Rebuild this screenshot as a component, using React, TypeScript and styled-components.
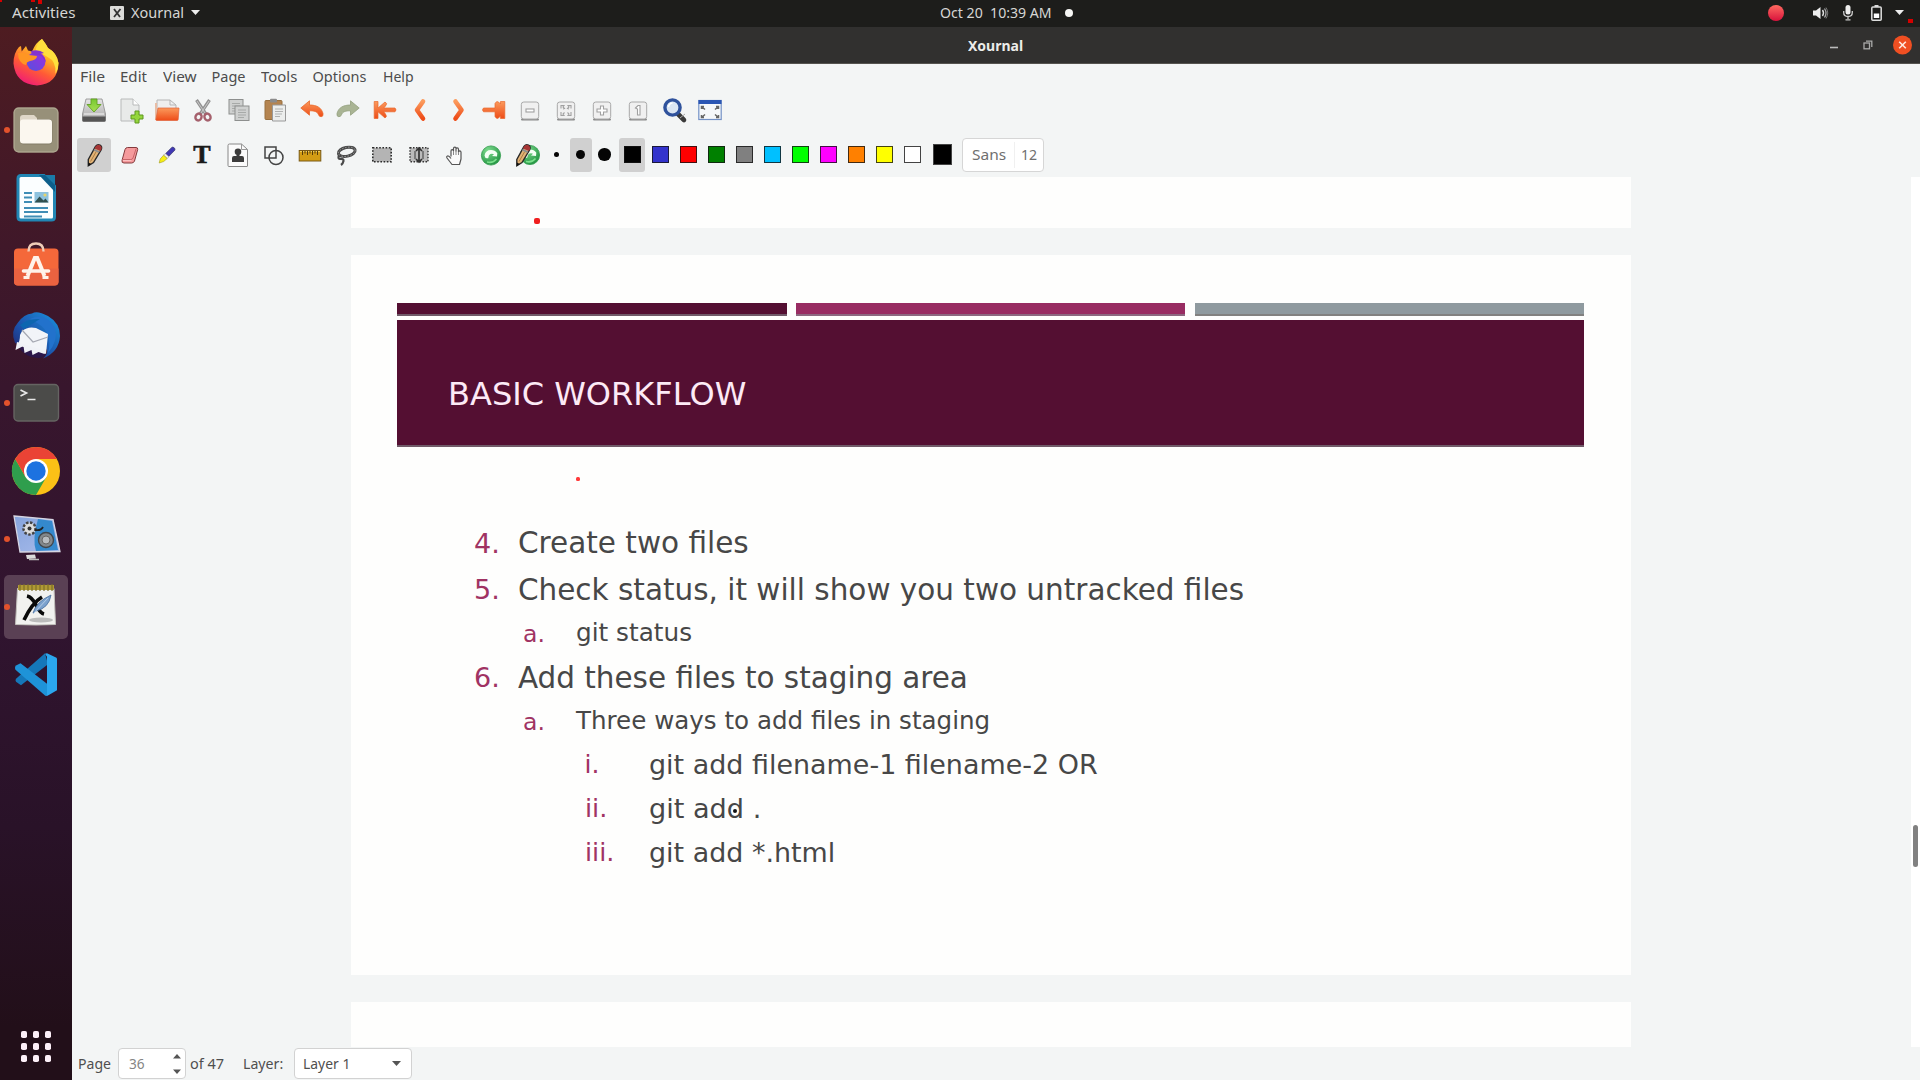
import React, { useLayoutEffect, useRef, useState } from "react";
import styled, { createGlobalStyle } from "styled-components";

const Global = createGlobalStyle`
  * { box-sizing: border-box; }
  html, body { margin: 0; padding: 0; overflow: hidden; }
  body { font-family: "Noto Sans", "Open Sans", sans-serif; background: #f3f5f5; }
  svg { display: block; overflow: visible; }
`;

/* ---------- text that keeps a fixed advance width ---------- */
const FitBox = styled.span<{ $w: number }>`
  display: inline-block;
  width: ${(p) => p.$w}px;
  white-space: pre;
  flex: none;
`;
const FitInner = styled.span`
  display: inline-block;
  transform-origin: 0 50%;
  white-space: pre;
`;
function Fit({ w, children }: { w: number; children: string }) {
  const ref = useRef<HTMLSpanElement>(null);
  const [scale, setScale] = useState(1);
  useLayoutEffect(() => {
    if (ref.current) setScale(w / ref.current.offsetWidth);
  }, [w]);
  return (
    <FitBox $w={w}>
      <FitInner ref={ref} style={{ transform: `scaleX(${scale})` }}>
        {children}
      </FitInner>
    </FitBox>
  );
}

/* ---------- shell ---------- */
const Screen = styled.div`
  position: relative;
  width: 1920px;
  height: 1080px;
  display: flex;
  flex-direction: column;
  overflow: hidden;
`;
const TopBar = styled.header`
  height: 27px;
  flex: none;
  display: grid;
  grid-template-columns: 940px 1fr 152px;
  align-items: center;
  padding-bottom: 2px;
  background: #1d1d1b;
  color: #d6d6d4;
  font-size: 14.5px;
  line-height: 25px;
`;
const TopLeft = styled.div`
  display: flex;
  align-items: center;
  padding-left: 12px;
`;
const AppMenu = styled.div`
  display: flex;
  align-items: center;
  margin-left: 35px;
  gap: 7px;
`;
const Clock = styled.div`
  display: flex;
  align-items: center;
  gap: 13px;
`;
const ClockDot = styled.i`
  width: 8px;
  height: 8px;
  border-radius: 50%;
  background: #f6f6f4;
`;
const Tray = styled.div`
  display: flex;
  align-items: center;
`;
const Body = styled.div`
  flex: 1;
  display: flex;
  min-height: 0;
`;
const Dock = styled.nav`
  width: 72px;
  flex: none;
  display: flex;
  flex-direction: column;
  align-items: center;
  gap: 4.1px;
  padding: 3.3px 0 18.5px;
  background: linear-gradient(#4e1c21 0, #441927 150px, #38162d 360px, #30142f 600px, #291228 800px, #220f19 1000px);
`;
const DockItem = styled.div<{ $active?: boolean }>`
  position: relative;
  width: 64px;
  height: 64px;
  flex: none;
  display: flex;
  align-items: center;
  justify-content: center;
  border-radius: 5px;
  background: ${(p) => (p.$active ? "#5a4054" : "transparent")};
`;
const RunDot = styled.i`
  position: absolute;
  left: 0;
  top: 29px;
  width: 6px;
  height: 6px;
  border-radius: 50%;
  background: #e3522c;
`;
const AppsGrid = styled.div`
  margin-top: auto;
  display: grid;
  grid-template-columns: repeat(3, 6.6px);
  gap: 5.4px;
`;
const AppsDot = styled.i`
  width: 6.6px;
  height: 6.6px;
  border-radius: 1.8px;
  background: #fdf0f8;
`;
const Window = styled.main`
  flex: 1;
  display: flex;
  flex-direction: column;
  min-width: 0;
  background: #f3f5f5;
`;
const TitleBar = styled.div`
  height: 37px;
  flex: none;
  display: grid;
  grid-template-columns: 896px 1fr auto;
  align-items: center;
  padding-right: 8.5px;
  background: #31302f;
  border-bottom: 1px solid #55534f;
  color: #ececea;
  font-size: 14.5px;
  font-weight: 700;
  line-height: 36px;
`;
const WinButtons = styled.div`
  grid-column: 3;
  display: flex;
  align-items: center;
`;
const MenuBar = styled.div`
  height: 27px;
  flex: none;
  display: flex;
  padding-left: 7.5px;
  color: #4c4c4c;
  font-size: 14.5px;
  line-height: 25px;
`;
const MenuItem = styled.div<{ $slot: number }>`
  width: ${(p) => p.$slot}px;
`;
const Toolbar = styled.div<{ $h: number; $lift?: number }>`
  height: ${(p) => p.$h}px;
  flex: none;
  display: flex;
  align-items: center;
  padding-left: 5px;
  padding-bottom: ${(p) => p.$lift ?? 0}px;
`;
const Tool = styled.button<{ $on?: boolean; $w?: number; $gap?: number }>`
  width: ${(p) => p.$w ?? 34}px;
  height: 34px;
  margin: 0 ${(p) => p.$gap ?? 2}px 0 0;
  padding: 0;
  border: 0;
  flex: none;
  display: flex;
  align-items: center;
  justify-content: center;
  border-radius: 3px;
  background: ${(p) => (p.$on ? "#d0d0d0" : "transparent")};
`;
const NibDot = styled.i<{ $d: number }>`
  width: ${(p) => p.$d}px;
  height: ${(p) => p.$d}px;
  border-radius: 50%;
  background: #050505;
`;
const Swatch = styled.i<{ $c: string }>`
  width: 17px;
  height: 17px;
  border: 1.5px solid rgba(20, 20, 20, 0.8);
  background: ${(p) => p.$c};
  background-clip: border-box;
`;
const CurrentColor = styled.i`
  width: 19px;
  height: 21px;
  margin: 0 10px 0 6px;
  background: #000;
  border: 1px solid #444;
  flex: none;
`;
const FontButton = styled.div`
  width: 82px;
  height: 34px;
  display: flex;
  align-items: center;
  padding-left: 9px;
  border: 1px solid #d6d6d6;
  border-radius: 4px;
  background: #fff;
  color: #6f6f6f;
  font-size: 15px;
  line-height: 31px;
`;
const FontSep = styled.i`
  width: 1px;
  height: 26px;
  margin: 0 6px 0 8px;
  background: #f0f0f0;
`;

/* ---------- canvas ---------- */
const Canvas = styled.section`
  height: 870px;
  flex: none;
  display: grid;
  grid-template-columns: 279px 1280px 1fr 9px;
`;
const Pages = styled.div`
  grid-column: 2;
  display: flex;
  flex-direction: column;
  gap: 27px;
`;
const Sheet = styled.div<{ $h: number }>`
  height: ${(p) => p.$h}px;
  flex: none;
  background: #fefefd;
`;
const Slide = styled(Sheet)`
  padding: 48px 47px 0 46px;
`;
const Bars = styled.div`
  display: grid;
  grid-template-columns: 389.5px 389px 389px;
  justify-content: space-between;
`;
const Bar = styled.div<{ $c: string; $edge: string }>`
  height: 12.5px;
  background: ${(p) => p.$c};
  border-bottom: 2px solid ${(p) => p.$edge};
`;
const Banner = styled.h1`
  margin: 4.5px 0 0;
  height: 126.5px;
  padding: 54px 0 0 50.5px;
  background: #540f32;
  border-bottom: 2px solid #705a68;
  color: #fdeaf6;
  font: 400 32.3px/40px "DejaVu Sans", sans-serif;
`;
const Outline = styled.div`
  display: flex;
  flex-direction: column;
  padding-top: 71.4px;
  color: #474747;
  font-family: "DejaVu Sans", sans-serif;
`;
const Row = styled.div<{ $indent: number; $size: number; $h: number }>`
  display: flex;
  height: ${(p) => p.$h}px;
  padding-left: ${(p) => p.$indent}px;
  font-size: ${(p) => p.$size}px;
  line-height: 50px;
`;
const Marker = styled.span<{ $slot: number; $size: number }>`
  width: ${(p) => p.$slot}px;
  flex: none;
  color: #a03363;
  font-size: ${(p) => p.$size}px;
  padding-top: 0.8px;
`;
const ScrollTrack = styled.div`
  grid-column: 4;
  background: #fff;
  padding: 648px 0 0 2px;
`;
const ScrollThumb = styled.div`
  width: 5px;
  height: 42px;
  border-radius: 3px;
  background: #818181;
`;
const Status = styled.footer`
  flex: 1;
  display: flex;
  align-items: center;
  padding-left: 6px;
  color: #4f4f4f;
  font-size: 14.5px;
  line-height: 31px;
`;
const PageField = styled.div`
  width: 68px;
  height: 31px;
  margin: 0 4px 0 7px;
  padding: 0 4px 0 10px;
  display: flex;
  align-items: center;
  justify-content: space-between;
  color: #858585;
  background: #fff;
  border: 1px solid #d2d2d2;
  border-radius: 4px;
`;
const LayerField = styled(PageField)`
  width: 118px;
  margin: 0 0 0 11px;
  padding: 0 10px 0 8px;
  color: #4f4f4f;
`;
const Spacer = styled.i<{ $w: number }>`
  width: ${(p) => p.$w}px;
  flex: none;
`;
const Mark = styled.i<{ $x: number; $y: number; $w: number; $h: number; $c: string; $r?: number }>`
  position: absolute;
  left: ${(p) => p.$x}px;
  top: ${(p) => p.$y}px;
  width: ${(p) => p.$w}px;
  height: ${(p) => p.$h}px;
  border-radius: ${(p) => p.$r ?? 0}px;
  background: ${(p) => p.$c};
`;

/* ---------- toolbar drawings (24 x 24) ---------- */
const S = ({ children, n = 24 }: { children: React.ReactNode; n?: number }) => (
  <svg width={n} height={n} viewBox="0 0 24 24" fill="none">{children}</svg>
);
const Defs = () => (
  <svg width="0" height="0" style={{ position: "absolute" }}>
    <defs>
      <linearGradient id="or" x1="0" y1="0" x2="0" y2="1"><stop stopColor="#fb9a5c" /><stop offset="1" stopColor="#ee4c18" /></linearGradient>
      <linearGradient id="silver" x1="0" y1="0" x2="0" y2="1"><stop stopColor="#e6e6e6" /><stop offset="1" stopColor="#a5a5a5" /></linearGradient>
      <linearGradient id="grn" x1="0" y1="0" x2="0" y2="1"><stop stopColor="#77c832" /><stop offset="1" stopColor="#a8e052" /></linearGradient>
      <radialGradient id="sph" cx=".35" cy=".25" r=".9"><stop stopColor="#7ddb8e" /><stop offset="1" stopColor="#168a37" /></radialGradient>
      <linearGradient id="ffo" x1=".8" y1="0" x2=".3" y2="1"><stop stopColor="#fff044" /><stop offset=".35" stopColor="#ffb024" /><stop offset=".65" stopColor="#ff5a36" /><stop offset="1" stopColor="#f01a78" /></linearGradient>
      <linearGradient id="ffp" x1="1" y1="0" x2="0" y2="1"><stop stopColor="#a02be0" /><stop offset="1" stopColor="#5452dd" /></linearGradient>
      <linearGradient id="rec" x1="0" y1="0" x2="0" y2="1"><stop stopColor="#ff6a60" /><stop offset="1" stopColor="#d8123c" /></linearGradient>
      <linearGradient id="tb" x1="1" y1="0" x2="0" y2="1"><stop stopColor="#1a94e0" /><stop offset=".6" stopColor="#1c50a8" /><stop offset="1" stopColor="#231a60" /></linearGradient>
      <linearGradient id="scr" x1="0" y1="0" x2="1" y2="1"><stop stopColor="#86a4dc" /><stop offset="1" stopColor="#a9bcec" /></linearGradient>
    </defs>
  </svg>
);
const Save = () => (
  <S><path d="M4 1h16l3.500 15v6.500q0 1-1 1h-21q-1 0-1-1V16Z" fill="url(#silver)" stroke="#8a8a8a" strokeWidth=".8" /><path d="M.5 18.500h23v4q0 1-1 1h-21q-1 0-1-1Z" fill="#555" /><path d="M2 16h20" stroke="#f8f8f8" /><path d="M9 1h6v5.500h4L12 14 5 6.500h4Z" fill="url(#grn)" stroke="#62a022" strokeWidth=".9" /></S>
);
const NewDoc = () => (
  <S><path d="M2 1h12l6 6v16H2Z" fill="#e8eae9" stroke="#b8baba" /><path d="M14 1v6h6" fill="#fff" stroke="#b8baba" /><path d="M16 13h4v4h4v4h-4v4h-4v-4h-4v-4h4Z" fill="#94d63c" stroke="#5f971f" /></S>
);
const Open = () => (
  <S><path d="M2 2h13l6 5v8H2Z" fill="#efefef" stroke="#b5b5b5" /><path d="M15 2v5h6" stroke="#b5b5b5" /><path d="M0 5h2v17H0Z" fill="#e8bda5" /><path d="M3 10h21l-.8 11.500q-.1 1-1.200 1H2q-1.300 0-1.100-1Z" fill="url(#or)" stroke="#e0623a" strokeWidth=".7" /></S>
);
const Cut = () => (
  <S><path d="M5.500 2 15.500 17M18.500 2l-10 15" stroke="#929292" strokeWidth="3.200" /><path d="M6 3l8 12M18 3l-8 12" stroke="#c9c9c9" strokeWidth="1" /><ellipse cx="7.500" cy="19" rx="3" ry="3.500" stroke="#a5606c" strokeWidth="2.400" transform="rotate(25 7.500 19)" /><ellipse cx="16.500" cy="19" rx="3" ry="3.500" stroke="#a5606c" strokeWidth="2.400" transform="rotate(-25 16.500 19)" /></S>
);
const Copy = () => (
  <S>{[[2, 1.5], [8, 8]].map(([x, y]) => (<g key={x}><rect x={x} y={y} width="14" height="14.500" fill="#cfd1d0" stroke="#8d8f8e" /><path d={`M${x + 3} ${y + 4}h8M${x + 3} ${y + 6.5}h8M${x + 3} ${y + 9}h8M${x + 3} ${y + 11.5}h6`} stroke="#a3a5a4" strokeWidth=".9" /></g>))}</S>
);
const Paste = () => (
  <S><rect x="2" y="2.500" width="17" height="19" rx="1" fill="#b48450" stroke="#98703f" /><rect x="7" y=".8" width="7" height="3.600" rx="1" fill="#8b8b8b" /><path d="M9.500 7h13v16h-13Z" fill="#eceeed" stroke="#999" /><path d="M12 11h8M12 13.500h8M12 16h7M12 18.500h5" stroke="#aaa" strokeWidth=".9" /></S>
);
const undoPath = "M.8 10 9.500 2.800v4.200c7 0 12 2.500 13.500 8.500q.5 3-1.800 3.200-2 .1-2.700-2c-1.200-3-4-4-9-3.900v4.400Z";
const Undo = () => <S><path d={undoPath} fill="url(#or)" stroke="#e9692c" strokeWidth=".8" /></S>;
const Redo = () => <S><path d={undoPath} fill="#a9b494" stroke="#939f7d" strokeWidth=".8" transform="translate(24 0) scale(-1 1)" /></S>;
const first = "M1.200 3.500h3.800v6.500l7-6q3 1.200.5 4L10.800 10H22q2 1.900 0 3.800H10.800l1.700 2.200q2 2.800-.5 4l-7-6.200v6.700H1.200Z";
const last = "M1.500 10H13V5.500q1.500-3 3.500-1.500l2 2V3.500h4.300v17h-4.300V18l-2 2q-2 1.500-3.500-1.500V13.800H1.500q-2-1.900 0-3.800Z";
const FirstPg = () => <S><path d={first} fill="url(#or)" stroke="#e9692c" strokeWidth=".7" /></S>;
const LastPg = () => <S><path d={last} fill="url(#or)" stroke="#e9692c" strokeWidth=".7" /></S>;
const PrevPg = () => <S><path d="M15 3.500 9 12l6 8.500" stroke="url(#or)" strokeWidth="4.600" strokeLinejoin="round" strokeLinecap="round" /></S>;
const NextPg = () => <S><path d="M9.500 3.500 15.500 12l-6 8.500" stroke="url(#or)" strokeWidth="4.600" strokeLinejoin="round" strokeLinecap="round" /></S>;
const KeyCap = ({ children }: { children: React.ReactNode }) => (
  <S><path d="M4 21.500h16" stroke="#8a8a8a" strokeWidth="2" strokeLinecap="round" /><rect x="3.300" y="4" width="17.400" height="17" rx="2.500" fill="#f0f0f0" stroke="#a8a8a8" /><g stroke="#a0a0a0" strokeWidth="1.100">{children}</g></S>
);
const ZoomOut = () => <KeyCap><rect x="8" y="11" width="8" height="3" fill="#fff" /></KeyCap>;
const ZoomFit = () => <KeyCap><path d="M7 10.500V7.500h3l-1 1.500 1.500 1.500L9 11M17 10.500V7.500h-3l1 1.500-1.500 1.500L15 11M7 14v3.500h3l-1-1.500 1.500-1.500M17 14v3.500h-3l1-1.500-1.500-1.500" /></KeyCap>;
const ZoomIn = () => <KeyCap><path d="M10.500 8h3v3H17v3h-3.500v3h-3v-3H7v-3h3.500Z" fill="#fff" /></KeyCap>;
const ZoomOne = () => <KeyCap><path d="m9.500 10 2.500-2.500h2v9.500h-2.500v-6Z" fill="#fff" /></KeyCap>;
const Magnify = () => (
  <S><path d="m15.500 15.500 6.500 6.500" stroke="#3a3a3a" strokeWidth="4.600" strokeLinecap="round" /><path d="m18 20 5-4" stroke="#aaa" strokeWidth="1" /><circle cx="10.500" cy="9.500" r="7.600" fill="#dbe6f3" stroke="#2f529c" strokeWidth="3.400" /><path d="M6.500 9q.5-3.500 4-4" stroke="#fff" strokeWidth="1.500" /></S>
);
const Full = () => (
  <S><rect x=".8" y="2.500" width="22.400" height="19" fill="#f6f8fa" stroke="#7391c6" strokeWidth="1.200" /><rect x=".5" y="2" width="23" height="4" fill="#2b56b4" /><g stroke="#666" strokeWidth="1.500"><path d="M3.500 11V8.500H6M3.500 8.500 7 11.500M20.500 11V8.500H18M20.500 8.500 17 11.500M3.500 17v2.500H6M3.500 19.500 7 16.500M20.500 17v2.500H18M20.500 19.500 17 16.500" /></g></S>
);
const PencilArt = () => (
  <><path d="M6.300 16.500 13.500 3.500q2-2.600 4.500-1.300 2.500 1.600 1.200 4.600L11.500 19.500l-5.200 3.300Z" fill="#e3b375" stroke="#282828" strokeWidth="1.400" /><path d="M13.500 3.500q2-2.600 4.500-1.300 2.500 1.600 1.200 4.600l-.8 1.300-6-2.700Z" fill="#a73636" /><path d="m12.300 5.800 5.500 2.800-1 1.500-5.300-2.700Z" fill="#8d8d8d" /><path d="M14 9 8.500 18.500" stroke="#a77b45" /><path d="m6.400 19.500 2.900 1.500-3 1.900Z" fill="#111" /></>
);
const Pencil = () => <S><PencilArt /></S>;
const Eraser = () => (
  <S><path d="M9.500 4.500H18q2 0 1.700 2L16.500 18q-.8 2-2.800 2H6q-2.500 0-2-2.500L7 6.500q.7-2 2.500-2Z" fill="#f59a9c" stroke="#833a3c" /><path d="M4.300 16.500h8.500q1.700 0 2.200-1.500l3.200-9.500" stroke="#c96468" /><path d="M5 17.500h8.500" stroke="#fbc0c0" /></S>
);
const Highlighter = () => (
  <S><g transform="translate(1.200 0)"><path d="m10.500 10.500 6-6q1-1 2.500.3t.5 2.500l-6 6.200Z" fill="#4038b4" stroke="#3b3b6a" strokeWidth=".7" /><path d="m10 10.500 3.800 3.300-1.800 1.700-3.600-3.300Z" fill="#eee" stroke="#888" strokeWidth=".5" /><path d="m8.400 12.200 3.600 3.300-3.500 3-4.500 1.500 1-4Z" fill="#f7ef14" stroke="#a09a20" strokeWidth=".6" /></g></S>
);
const LetterT = styled.span`
  font: 700 26px/30px "Liberation Serif", "DejaVu Serif", serif;
  color: #1a1a1a;
  -webkit-text-stroke: 0.6px #1a1a1a;
`;
const Picture = () => (
  <S><path d="M3.500 1h12l6 5.500V23q0 .5-.5.500H3q-1 0-1-1V2.500q0-1.500 1.500-1.500Z" fill="#fbfbfb" stroke="#888" /><path d="M15.500 1v5.500h6" stroke="#999" /><circle cx="12" cy="8.700" r="3.300" fill="#3c3c3c" /><path d="M10.500 11h3v2h2.500q2 .2 2 2v4H6v-4q0-1.800 2-2h2.500Z" fill="#3c3c3c" /></S>
);
const Shapes = () => <S><g stroke="#444" strokeWidth="1.500"><rect x="3" y="4" width="11" height="11" /><circle cx="14" cy="14.500" r="7" /></g></S>;
const Ruler = () => <S><rect x="1.200" y="7.500" width="21.600" height="10.500" fill="#d29c14" stroke="#7b5a14" /><path d="M2 8.500h20" stroke="#f3cf59" /><path d="M4.500 8v4M7 8v2.500M9.500 8v4M12 8v2.500M14.500 8v4M17 8v2.500M19.500 8v4" stroke="#543d0c" /></S>;
const Lasso = () => <S><g transform="rotate(-12 12 10)"><ellipse cx="13" cy="9" rx="8.500" ry="4.400" stroke="#4a4a4a" strokeWidth="3" /><ellipse cx="13" cy="9" rx="8.500" ry="4.400" stroke="#aaa" strokeWidth=".8" strokeDasharray="1.500 1.500" /></g><path d="M5 12.500q-1.500 3 1 3.500 4-.5 3.500 2t-2.500 4" stroke="#4a4a4a" strokeWidth="2.200" /></S>;
const SelRect = () => <S><rect x="2.800" y="4.800" width="18.400" height="14" fill="#b4b4b4" stroke="#2b2b2b" strokeWidth="1.600" strokeDasharray="1.600 1.600" /></S>;
const VSpace = () => <S><rect x="3" y="4.800" width="18" height="14" fill="#bbb" stroke="#333" strokeWidth="1.400" strokeDasharray="1.500 1.500" /><path d="M12 5v14M9 8l3-3 3 3M9 16l3 3 3-3" stroke="#333" strokeWidth="1.700" /><path d="M8 8v8M16 8v8" stroke="#666" strokeWidth="1.500" /></S>;
const HandTool = () => <S><path d="M8 13.500V8q0-1.300 1.200-1.300T10.500 8V5.500q0-1.300 1.300-1.300T13 5.500V8 6q.2-1.200 1.300-1.200T15.500 6.200V9q.3-1.300 1.300-1.200T18 9.200V16l-1.500 5.500H9L4 15q-.8-1.500.5-2t3.500 2.500" fill="#fafafa" stroke="#555" strokeWidth="1.200" strokeLinejoin="round" /><path d="M10.500 8v4M13 8v4M15.500 9v3" stroke="#888" /></S>;
const BallArt = ({ x = 0, y = 0 }) => <g transform={`translate(${x} ${y})`}><circle cx="12" cy="12.500" r="9.600" fill="url(#sph)" stroke="#2f9b4a" strokeWidth=".8" /><path d="M5.500 12.500Q6.500 7 12 7q4 0 6.300 3.200l-.3 3.300-5-.5 2-1.800q-3-1.200-5 1l-.8 3Q6 16 5.500 12.500Z" fill="#f4fff4" /><path d="M8 19q6 1.500 9.500-3" stroke="#7be08c" strokeWidth="1.500" /></g>;
const Default = () => <S><BallArt /></S>;
const DefaultPen = () => <S><BallArt x={3} y={-0.5} /><g transform="translate(-4.500 0)"><PencilArt /></g></S>;

const row1: [React.FC, number][] = [
  [Save, 2.5], [NewDoc, 2], [Open, 2.5], [Cut, 2], [Copy, 2], [Paste, 3], [Undo, 2], [Redo, 2.5],
  [FirstPg, 1.5], [PrevPg, 4], [NextPg, 1.5], [LastPg, 2.5], [ZoomOut, 2], [ZoomFit, 2], [ZoomIn, 2], [ZoomOne, 1.5], [Magnify, 2.5], [Full, 2],
];
const swatches = ["#000", "#3333cc", "#ff0000", "#008000", "#808080", "#00c0ff", "#00ff00", "#ff00ff", "#ff8000", "#ffff00", "#ffffff"];
const menus: [string, number, number][] = [["File", 25, 40], ["Edit", 27, 43], ["View", 34, 49], ["Page", 34, 49], ["Tools", 36, 52], ["Options", 54, 70], ["Help", 31, 40]];
const editTools: [React.FC, number][] = [[Picture, 2], [Shapes, 2], [Ruler, 2], [Lasso, 2], [SelRect, 2.5], [VSpace, 2], [HandTool, 2.5], [Default, 1.5]];

/* ---------- dock drawings (48 x 48) ---------- */
const D = ({ children }: { children: React.ReactNode }) => <svg width="48" height="48" viewBox="0 0 48 48" fill="none">{children}</svg>;
const Firefox = () => (
  <D><path d="M30 1q4 5 6 9 9 5 10.500 15Q46 46 25 47.500 3.500 46 1.500 25.500 1.500 15 7 9l2-1 .7 5.500L14 8l2 4.500 4 1Q24 4 30 1Z" fill="url(#ffo)" /><path d="M30 1q4 5 6 9 9 5 10.500 15 0 6-3 11 1-13-8-17-8-5-12-5 1-9 6.500-13Z" fill="#ffdf3d" /><circle cx="24" cy="23.500" r="9.500" fill="url(#ffp)" /><path d="M19 13q8-2 13 2l-4 1q6 3 5.500 8Q30 15 20 17Z" fill="#8534cf" /><path d="M6 15q8-1 11 2l8 1q0 4-7 5-4 1-4 4Q6 25 6 15Z" fill="#ff9623" /></D>
);
const Files = () => (
  <D><rect x="1.500" y="1.500" width="45" height="45" rx="5" fill="#979079" /><rect x="2.200" y="2.200" width="43.600" height="43.600" rx="4.500" fill="none" stroke="#ada58f" strokeWidth="1.200" /><path d="M8 14q0-4 3.500-4h11l3 3H37q3.500 0 3.500 3.500V34q0 4.500-4 4.500H12q-4 0-4-4.500Z" fill="#6f6a58" opacity=".5" /><path d="M8 12q0-3 3-3h11l3 3v5H8Z" fill="#dfd7c8" /><rect x="8" y="13.500" width="32" height="24" rx="3" fill="#fbf7ef" /></D>
);
const Writer = () => (
  <D><path d="M9 1.500h23L42.500 12v31q0 3-3 3H9q-3 0-3-3V4.500q0-3 3-3Z" fill="#fbfeff" stroke="#2186b4" strokeWidth="3" /><path d="M27 1h13.500q2.500 0 2.500 2.500V18Z" fill="#0d5f8b" /><path d="M33 1h10v10Z" fill="#1a7ba8" /><path d="M12 19h8M12 23.500h8M12 28h8M12 34h24M12 38h24M12 42.500h18" stroke="#3f8db5" strokeWidth="1.900" /><rect x="22.500" y="18" width="14" height="10.500" fill="#8dc2de" /><path d="m22.500 28.500 5-6 4 4 2-2 3 4Z" fill="#31504f" /><circle cx="33" cy="21" r="1.600" fill="#e7d46c" /></D>
);
const Software = () => (
  <D><rect x="2" y="5.500" width="44.500" height="37" rx="4" fill="#f4683a" /><path d="M2 25.500h44.500v13q0 4-4 4H6q-4 0-4-4Z" fill="#ea6240" /><path d="M16.500 8.500q0-8 7.500-8t7.500 8" stroke="#f0cdb8" strokeWidth="2.400" /><path d="m15.500 33 7.300-18h2.400l7.300 18" stroke="#fff3ea" strokeWidth="4" /><path d="M11.500 28h25" stroke="#fff3ea" strokeWidth="3.600" strokeLinecap="round" /><path d="M11.500 34.500h6M30.500 34.500h6" stroke="#fff3ea" strokeWidth="3" /></D>
);
const Bird = () => (
  <D><path d="M20 2.500Q25-1 36 5q12 7 12 20-1 16-17 22.500 5-4 4-9L3 32Q-2 20 6 11.500 12 3 20 2.500Z" fill="url(#tb)" /><path d="M18 8q16-7 25 9 4 12-7 25 3-10-1-20-4-8-17-14Z" fill="#2272cc" /><path d="M8 14q8-7 20-6L12 18Z" fill="#0d66b0" /><path d="M10 20q6-5 14-3l12 6-2 20L5 34q3-3 3-10Z" fill="#f2f4f8" /><path d="m10 19 11 12 15-5" stroke="#a6a9b3" strokeWidth="1.200" /><path d="m5 34 29 9q-3 4-8 4-13 0-21-13Z" fill="#2b1649" /><path d="m5 31-1.500 8 8-4 1 7 7-3 1 5 6-3 6 2 1.500-3Z" fill="#f0f2f7" /></D>
);
const Terminal = () => (
  <D><rect x="2" y="5.500" width="44.500" height="36.500" rx="4" fill="#4b4b49" stroke="#656462" strokeWidth="1.400" /><path d="m8.500 11 6 3-6 3M15.500 20.500h8" stroke="#e8e8e8" strokeWidth="1.700" /></D>
);
const Chrome = () => (
  <D><circle cx="24" cy="24" r="24" fill="#fbc116" /><path d="M3.200 12A24 24 0 0 0 24 48l10.400-18L24 34 13.600 30Z" fill="#2f9e4d" /><path d="M3.200 12A24 24 0 0 1 44.800 12H24L13.600 30Z" fill="#ea4335" /><circle cx="24" cy="24" r="12" fill="#fff" /><circle cx="24" cy="24" r="9.700" fill="#1c72e0" /></D>
);
const Recorder = () => (
  <D><path d="m2 1 39 3.500 7 32-40 .5Z" fill="url(#scr)" stroke="#d5d5e2" strokeWidth="1.300" /><path d="m26 4 14 2 6 29-22 1q-4-12 2-32Z" fill="#3489cd" /><circle cx="17.500" cy="13.500" r="6" fill="#ddd" stroke="#444" strokeWidth="2.500" strokeDasharray="2.500 1.500" /><circle cx="17.500" cy="13.500" r="2" fill="#333" /><path d="M23 15q6 1 8-3" stroke="#222" strokeWidth="1.800" /><circle cx="34" cy="25" r="7.500" fill="#83888c" stroke="#41474d" strokeWidth="1.400" /><circle cx="34" cy="25" r="4" fill="#b8bcc0" stroke="#666" /><path d="m14 40 9-.5 1 4-9 .5Z" fill="#dadada" /><path d="M17 44.500h10" stroke="#bbb" strokeWidth="1.500" /></D>
);
const XournalIcon = () => (
  <D><path d="M5.500 5.500h36.500l1.500 36q-19 1-40 0Z" fill="#f1f1ef" stroke="#c2c0bc" /><path d="M6 2h36v5H6Z" fill="#b09a34" /><path d="M8 1v7M12 1v7M16 1v7M20 1v7M24 1v7M28 1v7M32 1v7M36 1v7M40 1v7" stroke="#7c6e2a" strokeWidth="1.200" /><ellipse cx="29" cy="37" rx="12" ry="2.600" fill="#bbb" /><path d="M15 13q5 1 9 9t8 9" stroke="#0a0a0a" strokeWidth="3.800" /><path d="M30 14Q20 20 12 37" stroke="#0a0a0a" strokeWidth="3.600" /><path d="M21 30q3-11 18-18-2 13-15 16Z" fill="#7ba1cd" stroke="#496f9d" strokeWidth=".8" /><path d="m21 31 15-16" stroke="#b6cde6" /></D>
);
const VsCode = () => (
  <D><g transform="translate(0 -.8)"><path d="m33 3 3 11-27 21-5-3.500q-1-1.500 0-3Z" fill="#1577b9" /><path d="m33 3.500 2-.5 9.500 4.500q.5.500.5 1.500v31l-9.500 5.500H33q2-1 2-3V6.500Z" fill="#2ba7ee" /><path d="m3.500 15.500 5-2.500L35 33.500V45q-1 .5-2 .3L3.500 19.500q-1-2 0-4Z" fill="#1e93d8" /></g></D>
);
const dock: [React.FC, boolean, boolean][] = [
  [Firefox, false, false], [Files, true, false], [Writer, false, false], [Software, false, false], [Bird, false, false],
  [Terminal, true, false], [Chrome, false, false], [Recorder, true, false], [XournalIcon, true, true], [VsCode, false, false],
];

/* indent, text size, row height, marker, marker slot, marker width, marker size, text, text width */
const rows: [number, number, number, string, number, number, number, string, number][] = [
  [77, 29.3, 46.7, "4.", 44, 26, 27, "Create two files", 230.5],
  [77, 29.3, 43.9, "5.", 44, 26, 27, "Check status, it will show you two untracked files", 726],
  [126, 24.5, 44.1, "a.", 52.5, 21.5, 23, "git status", 116],
  [77, 29.3, 43.6, "6.", 44, 26, 27, "Add these files to staging area", 450],
  [126, 24.5, 43.5, "a.", 53, 21.5, 23, "Three ways to add files in staging", 414],
  [187.5, 27, 44, "i.", 64.5, 15, 25, "git add filename-1 filename-2 OR", 449],
  [187.5, 27, 44, "ii.", 64.5, 22.5, 25, "git add .", 112.5],
  [187.5, 27, 44, "iii.", 64.5, 29.5, 25, "git add *.html", 186.5],
];

export default function App() {
  return (
    <Screen>
      <Global />
      <Defs />
      <TopBar>
        <TopLeft>
          <Fit w={63}>Activities</Fit>
          <AppMenu>
            <svg width="14" height="14" viewBox="0 0 14 14"><rect width="14" height="14" rx="1" fill="#dcdcda" /><path d="m4 3 6 8M10.500 3 4 11" stroke="#333" strokeWidth="1.800" /></svg>
            <Fit w={53}>Xournal</Fit>
            <svg width="9" height="5" viewBox="0 0 9 5"><path d="M0 0h9L4.500 5Z" fill="#eee" /></svg>
          </AppMenu>
        </TopLeft>
        <Clock><Fit w={112}>{"Oct 20  10:39 AM"}</Fit><ClockDot /></Clock>
        <Tray>
          <svg width="16" height="16" viewBox="0 0 16 16"><circle cx="8" cy="8" r="8" fill="url(#rec)" /></svg>
          <Spacer $w={29} />
          <svg width="16" height="14" viewBox="0 0 16 14" fill="none"><path d="M0 4.500h3L7.500 1v12L3 9.500H0Z" fill="#eee" /><path d="M9.500 4q2 3 0 6" stroke="#ddd" strokeWidth="1.400" /><path d="M11.500 2.500q3 4.500 0 9" stroke="#aaa" strokeWidth="1.300" /><path d="M13 1.500q3.500 5.500 0 11" stroke="#777" /></svg>
          <Spacer $w={14} />
          <svg width="10" height="17" viewBox="0 0 10 17" fill="none"><rect x="2.500" y="1" width="5" height="9.500" rx="2.500" fill="#eee" /><path d="M.7 7v1.500q0 4 4.300 4t4.300-4V7M5 12.500V15M2.500 15.800h5" stroke="#ccc" strokeWidth="1.300" /></svg>
          <Spacer $w={18} />
          <svg width="11" height="16" viewBox="0 0 11 16" fill="none"><path d="M3.500 0h4v2h-4Z" fill="#ddd" /><rect x=".8" y="2" width="9.400" height="13.200" rx="1" stroke="#ddd" strokeWidth="1.500" /><path d="M2.800 8.500h5.400V13H2.800Z" fill="#fff" /></svg>
          <Spacer $w={13} />
          <svg width="9" height="5" viewBox="0 0 9 5"><path d="M0 0h9L4.500 5Z" fill="#eee" /></svg>
        </Tray>
      </TopBar>
      <Body>
        <Dock>
          {dock.map(([Icon, run, active], i) => (
            <DockItem key={i} $active={active}>{run && <RunDot />}<Icon /></DockItem>
          ))}
          <AppsGrid>{Array.from({ length: 9 }, (_, i) => <AppsDot key={i} />)}</AppsGrid>
        </Dock>
        <Window>
          <TitleBar>
            <span />
            <Fit w={55}>Xournal</Fit>
            <WinButtons>
              <svg width="8" height="10" viewBox="0 0 8 10"><path d="M0 7.500h8" stroke="#bbb" strokeWidth="1.600" /></svg>
              <Spacer $w={25} />
              <svg width="10" height="10" viewBox="0 0 10 10" fill="none" stroke="#aaa" strokeWidth="1.300"><rect x="1" y="3" width="5.500" height="5.800" /><path d="M3 1.200h5.800V7" /></svg>
              <Spacer $w={20} />
              <svg width="19" height="19" viewBox="0 0 19 19"><circle cx="9.500" cy="9" r="9.500" fill="#f04f22" /><path d="m6.200 5.700 6.600 6.600M12.800 5.700l-6.600 6.600" stroke="#ffe9df" strokeWidth="1.600" /></svg>
            </WinButtons>
          </TitleBar>
          <MenuBar>
            {menus.map(([t, w, slot]) => <MenuItem key={t} $slot={slot}><Fit w={w}>{t}</Fit></MenuItem>)}
          </MenuBar>
          <Toolbar $h={41} $lift={2.5}>
            {row1.map(([Icon, g], i) => <Tool key={i} $gap={g}><Icon /></Tool>)}
          </Toolbar>
          <Toolbar $h={45}>
            <Tool $on><Pencil /></Tool>
            <Tool><Eraser /></Tool>
            <Tool><Highlighter /></Tool>
            <Tool><LetterT>T</LetterT></Tool>
            {editTools.map(([Icon, g], i) => <Tool key={i} $gap={g}><Icon /></Tool>)}
            <Tool $gap={2}><DefaultPen /></Tool>
            <Tool $w={22}><NibDot $d={5.5} /></Tool>
            <Tool $w={22} $on><NibDot $d={9} /></Tool>
            <Tool $w={22} $gap={3.5}><NibDot $d={12.5} /></Tool>
            {swatches.map((c, i) => <Tool key={c} $w={26} $on={i === 0}><Swatch $c={c} /></Tool>)}
            <CurrentColor />
            <FontButton><Fit w={34}>Sans</Fit><FontSep /><Fit w={16}>12</Fit></FontButton>
          </Toolbar>
          <Canvas>
            <Pages>
              <Sheet $h={51} />
              <Slide $h={720}>
                <Bars>
                  <Bar $c="#540f32" $edge="#705a68" />
                  <Bar $c="#982c62" $edge="#8c6880" />
                  <Bar $c="#8f9a9f" $edge="#828180" />
                </Bars>
                <Banner><Fit w={298.5}>BASIC WORKFLOW</Fit></Banner>
                <Outline>
                  {rows.map(([ind, size, h, m, slot, mw, ms, text, tw], i) => (
                    <Row key={i} $indent={ind} $size={size} $h={h}>
                      <Marker $slot={slot} $size={ms}><Fit w={mw}>{m}</Fit></Marker>
                      <Fit w={tw}>{text}</Fit>
                    </Row>
                  ))}
                </Outline>
              </Slide>
              <Sheet $h={45} />
            </Pages>
            <ScrollTrack><ScrollThumb /></ScrollTrack>
          </Canvas>
          <Status>
            <Fit w={33}>Page</Fit>
            <PageField>
              <Fit w={16}>36</Fit>
              <svg width="8" height="20" viewBox="0 0 8 20"><path d="M0 4.500h8L4 0ZM0 15.500h8L4 20Z" fill="#555" /></svg>
            </PageField>
            <Fit w={34}>of 47</Fit>
            <Spacer $w={19} />
            <Fit w={40}>Layer:</Fit>
            <LayerField>
              <Fit w={47}>Layer 1</Fit>
              <svg width="9" height="5" viewBox="0 0 9 5"><path d="M0 0h9L4.500 5Z" fill="#555" /></svg>
            </LayerField>
          </Status>
        </Window>
      </Body>
      <Mark $x={0} $y={0} $w={2} $h={2} $c="#d40000" />
      <Mark $x={31} $y={0} $w={4} $h={2} $c="#d40000" />
      <Mark $x={38} $y={0} $w={4} $h={4} $c="#d40000" />
      <Mark $x={1908} $y={19} $w={5} $h={4} $c="#d40000" />
      <Mark $x={534} $y={218} $w={6} $h={6} $c="#f01f1f" $r={2} />
      <Mark $x={576} $y={477} $w={4} $h={4} $c="#ff3a3a" $r={1.5} />
      <Mark $x={733} $y={809} $w={4} $h={4} $c="#111" $r={2} />
    </Screen>
  );
}
